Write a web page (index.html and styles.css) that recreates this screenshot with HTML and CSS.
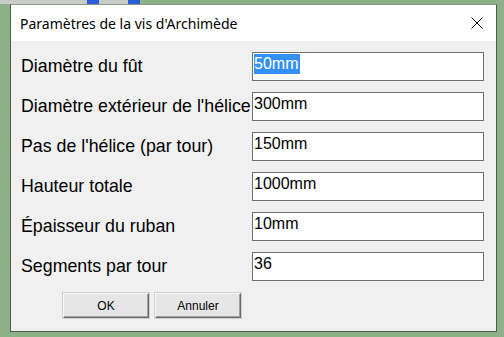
FILE: index.html
```html
<!DOCTYPE html>
<html lang="fr">

<head>
    <meta charset="UTF-8">
    <meta name="viewport" content="width=device-width, initial-scale=1.0">
    <title>Paramètres de la vis d'Archimède</title>
    <link rel="stylesheet" href="styles.css">
</head>

<body>
    <div class="toolbar">
        <span class="tool"></span>
        <span class="tool blue"></span>
        <span class="tool"></span>
        <span class="tool blue"></span>
    </div>
    <div class="dialog">
        <div class="titlebar">
            <span class="title">Paramètres de la vis d'Archimède</span>
            <svg class="close" width="12" height="12" viewBox="0 0 12 12">
                <path d="M0.5 0.5 L11.5 11.5 M11.5 0.5 L0.5 11.5" stroke="#000" stroke-width="1" fill="none" />
            </svg>
        </div>
        <div class="content">
            <div class="form">
                <label class="label">Diamètre du fût</label>
                <div class="field"><span class="sel">50mm</span></div>

                <label class="label">Diamètre extérieur de l'hélice</label>
                <div class="field">300mm</div>

                <label class="label">Pas de l'hélice (par tour)</label>
                <div class="field">150mm</div>

                <label class="label">Hauteur totale</label>
                <div class="field">1000mm</div>

                <label class="label">Épaisseur du ruban</label>
                <div class="field">10mm</div>

                <label class="label">Segments par tour</label>
                <div class="field">36</div>
            </div>
            <div class="buttons">
                <button class="btn">OK</button>
                <button class="btn">Annuler</button>
            </div>
        </div>
    </div>
</body>

</html>
```

FILE: styles.css
```css
body {
    margin: 0;
    height: 337px;
    overflow: hidden;
    background-color: #8db088;
    font-family: "Liberation Sans", Arial, sans-serif;
}

.toolbar {
    display: flex;
    height: 4px;
    width: 140px;
    background-color: #c9cbc8;
}

.tool {
    width: 14px;
    margin-left: 66px;
}

.tool + .tool {
    margin-left: 8px;
}

.tool.blue {
    background-color: #2a5ad8;
}

.dialog {
    margin-left: 10px;
    width: 485px;
    height: 326px;
    border: 1px solid #4f5a4d;
    border-top-color: #8c9a89;
    background-color: #f0f0f0;
    display: flex;
    flex-direction: column;
}

.titlebar {
    height: 36px;
    background-color: #ffffff;
    display: flex;
    align-items: center;
    padding-left: 9px;
    padding-right: 13px;
}

.title {
    flex: 1;
    font-family: "Noto Sans", "Open Sans", sans-serif;
    font-size: 14px;
    color: #000;
}

.close {
    display: block;
}

.content {
    padding: 11px 12px 0 10px;
}

.form {
    display: grid;
    grid-template-columns: 231px 232px;
    grid-auto-rows: 29px;
    row-gap: 11px;
}

.label {
    display: flex;
    align-items: center;
    font-size: 17.8px;
    color: #000;
    white-space: nowrap;
}

.field {
    background-color: #ffffff;
    border: 1px solid #707070;
    font-size: 16px;
    line-height: 20px;
    padding: 1px 0 0 1px;
    color: #000;
}

.sel {
    display: inline-block;
    background-color: #3391f5;
    color: #ffffff;
    padding-right: 2px;
}

.buttons {
    display: flex;
    gap: 6px;
    margin-top: 12px;
    padding-left: 42px;
}

.btn {
    width: 86px;
    height: 25px;
    font-family: "Liberation Sans", Arial, sans-serif;
    font-size: 12px;
    color: #000;
    background-color: #e6e6e6;
    border: 1px solid #f8f8f8;
    border-right-color: #6a6a6a;
    border-bottom-color: #6a6a6a;
    box-shadow: inset -1px -1px 0 #a0a0a0, 0 0 0 1px #cfcfcf;
    padding: 0;
}
```
